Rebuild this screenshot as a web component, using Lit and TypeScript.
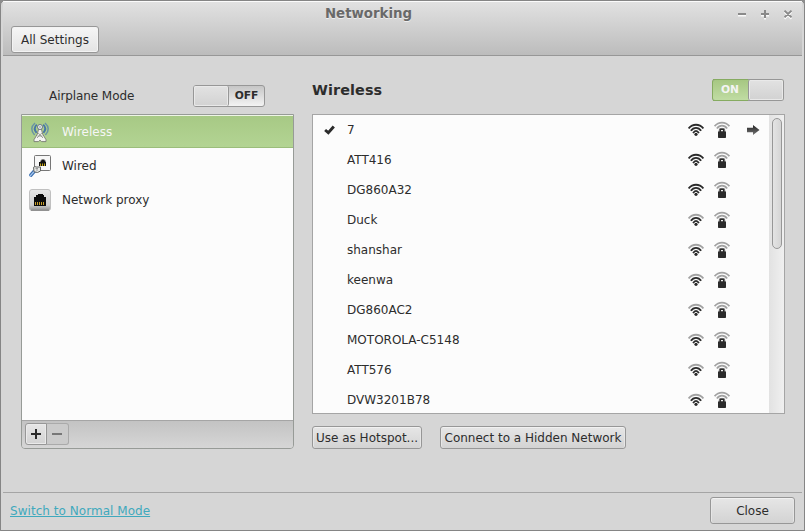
import { LitElement, html, css, svg } from "lit";
import { customElement, property } from "lit/decorators.js";

const base = css`
  :host { box-sizing: border-box; }
  *, *::before, *::after { box-sizing: border-box; }
  svg { display: block; }
`;

@customElement("push-button")
class PushButton extends LitElement {
  static styles = [base, css`
    :host { display: block; }
    .face {
      width: 100%; height: 100%;
      display: flex; align-items: center; justify-content: center;
      border: 1px solid #979797; border-radius: 3px;
      background: linear-gradient(#e6e6e6, #d3d3d3);
      box-shadow: inset 0 1px #f1f1f1, inset 1px 0 #e6e6e6, inset -1px 0 #e6e6e6;
      white-space: nowrap; color: #2d2d2d;
    }
    :host([bright]) .face { background: linear-gradient(#f6f6f6, #e3e3e3); box-shadow: inset 0 0 0 1px #f3f3f3; }
  `];
  render() { return html`<div class="face"><slot></slot></div>`; }
}

@customElement("toggle-switch")
class ToggleSwitch extends LitElement {
  @property({ type: Boolean, reflect: true }) on = false;
  static styles = [base, css`
    :host { display: block; width: 72px; height: 22px; }
    .track {
      display: flex; width: 72px; height: 22px; border: 1px solid #979797; border-radius: 3px;
      background: linear-gradient(#c6c6c6, #f3f3f3);
    }
    .knob {
      width: 35px; height: 20px; border-radius: 2px; background: linear-gradient(#e2e2e2, #d2d2d2);
      border-right: 1px solid #979797; box-shadow: inset 0 0 0 1px #e9e9e9;
    }
    .text {
      flex: 1; display: flex; align-items: center; justify-content: center;
      font-weight: bold; font-size: 10.7px; line-height: 18px; height: 19px; color: #2d2d2d;
    }
    :host([on]) .track { flex-direction: row-reverse; background: linear-gradient(#a6c782, #c0dca3); border-left-color: #86ab61; }
    :host([on]) .knob { border-right: 0; border-left: 1px solid #979797; }
    :host([on]) .text { color: #f4f4f4; margin: -1px 0; height: 22px; padding-right: 1px; border: solid #86ab61; border-width: 1px 0; }
  `];
  render() {
    return html`<div class="track"><div class="knob"></div><div class="text">${this.on ? "ON" : "OFF"}</div></div>`;
  }
}

const wifi = (full: boolean) => svg`
  <svg width="16" height="16" viewBox="0 0 16 16" fill="none" stroke="#2b2b2b" stroke-width="1.9">
    <path d="M0.6 6.4C4.6 1.6 11.4 1.6 15.4 6.4" stroke=${full ? "#2b2b2b" : "#a2a2a2"}/>
    <path d="M2.9 8.8C5.6 4.9 10.4 4.9 13.1 8.8"/>
    <path d="M5.1 11.1C6.8 8 9.2 8 10.9 11.1" stroke-width="1.8"/>
    <circle cx="8" cy="12.3" r="1.6" fill="#2b2b2b" stroke="none"/>
  </svg>`;

const lock = svg`
  <svg width="16" height="18" viewBox="0 0 16 18" fill="none" stroke="#a2a2a2" stroke-width="1.8">
    <path d="M0.6 5.2C4.6 .4 11.4 .4 15.4 5.2"/>
    <path d="M2.9 7.6C5.6 3.7 10.4 3.7 13.1 7.6"/>
    <path d="M5 9.8Q5.8 7.9 8 7.6Q10.2 7.9 11 9.8" stroke-width="1.6"/>
    <path d="M6.3 11V8.2H9.7V11" stroke="#2b2b2b" stroke-width="1.5" fill="#fcfcfc"/>
    <rect x="4" y="10.3" width="8" height="6.7" rx=".7" fill="#2b2b2b" stroke="none"/>
  </svg>`;

const antenna = svg`
  <svg width="20" height="22" viewBox="0 0 20 22" fill="none">
    <path d="M5 2Q-1.2 7.4 4.6 14M15 2Q21.2 7.4 15.4 14" stroke="#6a93a4" stroke-width="1.5"/>
    <path d="M6.8 3.6Q2.8 7.4 6.6 11.8M13.2 3.6Q17.2 7.4 13.4 11.8" stroke="#4777a6" stroke-width="1.9"/>
    <path d="M8.6 8L7.4 13 4 18.7V20.6H8.4L10 19.2 11.6 20.6H16V18.7L12.6 13 11.4 8Z" fill="#f4f4f2" stroke="#777b74" stroke-width=".9"/>
    <path d="M8.2 12L13 17M11.8 12L7 17M7.4 15H12.6" stroke="#92968f" stroke-width=".9"/>
    <circle cx="10" cy="6" r="2.5" fill="#f0f0f0" stroke="#6b7880"/>
    <circle cx="10" cy="6" r=".8" fill="#73869a"/>
  </svg>`;

const wired = svg`
  <svg width="22" height="22" viewBox="0 0 22 22" fill="none">
    <rect x="5.5" y=".5" width="16" height="15" rx="1" fill="#f7f7f7" stroke="#777"/>
    <path d="M10 11V7H11.5V5.5H12.5V4.5H15.5V5.5H16.5V7H17V11Z" fill="#111"/>
    <path d="M11.5 8.5V11M13.5 8.5V11M15.5 8.5V11" stroke="#c4a317"/>
    <path d="M5.5 16L.8 21.3" stroke="#3b6fb0" stroke-width="3.6"/>
    <path d="M5.5 16L.8 21.3" stroke="#a6c6ec" stroke-width="1.2"/>
    <path d="M4.5 12.3L6 11.5 7 12H11.5V16L8.5 17.5 5 16.8Z" fill="#e5e7e5" stroke="#626562"/>
    <path d="M6.5 13.5H9M7 15H9" stroke="#999"/>
  </svg>`;

const proxy = svg`
  <svg width="22" height="22" viewBox="0 0 22 22" fill="none">
    <defs><linearGradient id="plate" x2="0" y2="1"><stop stop-color="#e8e8e8"/><stop offset=".75" stop-color="#cfcfcf"/><stop offset="1" stop-color="#8f8f8f"/></linearGradient></defs>
    <rect x=".5" y=".5" width="21" height="21" rx="2.5" fill="url(#plate)" stroke="#c0c0c0"/>
    <path d="M2 21.3H20" stroke="#858585"/>
    <path d="M5 17V8H7V6H9V5H14V6H15V8H17V17Z" fill="#0c0c0c"/>
    <path d="M6.5 13V16M8.5 13V16M10.5 13V16M12.5 13V16M14.5 13V16" stroke="#c9a02c"/>
  </svg>`;

@customElement("device-list")
class DeviceList extends LitElement {
  static styles = [base, css`
    :host { display: flex; flex-direction: column; width: 273px; height: 335px; border: 1px solid #979b97; border-radius: 0 0 4px 4px; overflow: hidden; }
    .items { flex: 1; background: #fcfcfc; }
    .item { height: 34px; padding-left: 7px; display: flex; align-items: center; }
    .icon { width: 22px; display: flex; justify-content: center; }
    .name { margin-left: 11px; margin-top: -1px; }
    .selected { height: 33px; margin-bottom: 1px; border-top: 1px solid #eef5e6; border-bottom: 1px solid #9bbd7b; background: linear-gradient(#a7c985, #b3d493); color: #f6f6f6; }
    .selected .name { margin-top: 1px; }
    .bar { height: 28px; border-top: 1px solid #a5a5a5; background: linear-gradient(#c3c3c3, #d6d6d6); padding: 2px 3px; display: flex; }
    .tool { width: 22px; height: 22px; border: 1px solid #979797; border-radius: 3px 0 0 3px; background: linear-gradient(#e6e6e6, #d3d3d3); box-shadow: inset 0 0 0 1px #eaeaea; display: grid; place-items: center; }
    .off { border-left: 0; border-color: #aaa; border-radius: 0 3px 3px 0; background: #cbcbcb; box-shadow: none; }
    .off svg { transform: translateX(-1px); }
  `];
  render() {
    return html`
      <div class="items">
        <div class="item selected"><span class="icon">${antenna}</span><span class="name">Wireless</span></div>
        <div class="item"><span class="icon">${wired}</span><span class="name">Wired</span></div>
        <div class="item"><span class="icon">${proxy}</span><span class="name">Network proxy</span></div>
      </div>
      <div class="bar">
        <div class="tool"><svg width="10" height="10" viewBox="0 0 10 10"><path d="M0 5H10M5 0V10" stroke="#2b2b2b" stroke-width="2"/></svg></div>
        <div class="tool off"><svg width="10" height="10" viewBox="0 0 10 10"><path d="M0 5H10" stroke="#777" stroke-width="2"/></svg></div>
      </div>`;
  }
}

interface Network { name: string; full?: boolean; active?: boolean }
const networks: Network[] = [
  { name: "7", full: true, active: true }, { name: "ATT416", full: true }, { name: "DG860A32", full: true },
  { name: "Duck" }, { name: "shanshar" }, { name: "keenwa" }, { name: "DG860AC2" },
  { name: "MOTOROLA-C5148" }, { name: "ATT576" }, { name: "DVW3201B78" },
];

@customElement("network-list")
class NetworkList extends LitElement {
  static styles = [base, css`
    :host { display: flex; width: 473px; height: 300px; border: 1px solid #a5a5a5; background: #fcfcfc; overflow: hidden; }
    .rows { flex: 1; }
    .row { height: 30px; display: grid; grid-template-columns: 34px 341px 26px 33px 1fr; align-items: center; }
    .check { padding-left: 11px; }
    .name { line-height: 30px; height: 30px; }
    .scroll { width: 15px; padding: 3px 3px 0 3px; background: linear-gradient(90deg, #e2e2e2, #f0f0f0); }
    .thumb { width: 10px; height: 131px; border: 1px solid #979797; border-radius: 5px; background: linear-gradient(90deg, #e4e4e4, #d5d5d5); }
  `];
  render() {
    return html`
      <div class="rows">
        ${networks.map(n => html`
          <div class="row">
            <span class="check">${n.active ? svg`<svg width="11" height="10" viewBox="0 0 11 10"><path d="M1.1 5L4.3 7.7 9.8 1.5" fill="none" stroke="#2b2b2b" stroke-width="2.9"/></svg>` : ""}</span>
            <span class="name">${n.name}</span>
            ${wifi(!!n.full)}
            ${lock}
            ${n.active ? svg`<svg width="13" height="10" viewBox="0 0 13 10"><defs><linearGradient id="arrow" x2="0" y2="1"><stop stop-color="#222"/><stop offset="1" stop-color="#777"/></linearGradient></defs><path d="M0 2.8H6V0L12.5 5 6 10V7.2H0Z" fill="url(#arrow)"/></svg>` : ""}
          </div>`)}
      </div>
      <div class="scroll"><div class="thumb"></div></div>`;
  }
}

@customElement("app-root")
class AppRoot extends LitElement {
  static styles = [base, css`
    :host { display: block; width: 805px; height: 531px; background: #8c8c8c; overflow: hidden; font: 12px/16px "DejaVu Sans", sans-serif; color: #2d2d2d; }
    .window { width: 805px; height: 531px; display: flex; flex-direction: column; border: 1px solid #858585; border-radius: 5px 5px 0 0; background: #d6d6d6; overflow: hidden; }
    .header { height: 55px; margin: 0 2px; border-bottom: 1px solid #979797; background: linear-gradient(#e2e2e2, #bcbcbc); box-shadow: inset 0 1px #fbfbfb; }
    .title { height: 25px; display: grid; grid-template-columns: 1fr auto 1fr; align-items: center; }
    .caption { grid-column: 2; font-weight: bold; font-size: 13.33px; color: #696969; text-shadow: 0 1px #eee; transform: translateX(-34px); }
    .controls { justify-self: end; margin-right: 7px; display: flex; }
    .all { width: 88px; height: 27px; margin-left: 8px; }
    .main { flex: 1; display: flex; padding: 0 19px 0 20px; }
    .left { width: 273px; }
    .right { width: 473px; margin-left: 18px; }
    .head { height: 58px; display: flex; justify-content: space-between; }
    .airplane { margin: 32px 0 0 28px; letter-spacing: -0.08px; }
    .left toggle-switch { margin: 29px 29px 0 0; }
    .right toggle-switch { margin: 23px 1px 0 0; }
    .heading { font-weight: bold; font-size: 14.4px; letter-spacing: 0.1px; line-height: 20px; margin-top: 24px; }
    .actions { display: flex; gap: 18px; margin-top: 12px; }
    .hotspot { width: 110px; height: 23px; }
    .hidden { width: 186px; height: 23px; }
    .footer { height: 38px; margin: 0 2px; padding: 4px 7px 0 7px; border-top: 1px solid #a5a5a5; display: flex; justify-content: space-between; }
    .link { color: #3fa9bd; text-decoration: underline; margin-top: 6px; letter-spacing: 0.04px; }
    .close { width: 85px; height: 27px; }
  `];
  render() {
    return html`
      <div class="window">
        <div class="header">
          <div class="title">
            <span class="caption">Networking</span>
            <span class="controls">
              <svg width="60" height="12" viewBox="0 0 60 12" fill="none">
                <path d="M3 7.5H11M26 7.5H34M30 3.5V11.5M49.5 4L56.5 10.8M56.5 4L49.5 10.8" stroke="#fafafa" stroke-width="2"/>
                <path d="M3 6H11M26 6H34M30 2V10M49.5 2.6L56.5 9.4M56.5 2.6L49.5 9.4" stroke="#8a8a8a" stroke-width="2"/>
              </svg>
            </span>
          </div>
          <push-button class="all" bright>All Settings</push-button>
        </div>
        <div class="main">
          <div class="left">
            <div class="head"><span class="airplane">Airplane Mode</span><toggle-switch></toggle-switch></div>
            <device-list></device-list>
          </div>
          <div class="right">
            <div class="head"><span class="heading">Wireless</span><toggle-switch on></toggle-switch></div>
            <network-list></network-list>
            <div class="actions">
              <push-button class="hotspot">Use as Hotspot...</push-button>
              <push-button class="hidden">Connect to a Hidden Network</push-button>
            </div>
          </div>
        </div>
        <div class="footer"><span class="link">Switch to Normal Mode</span><push-button class="close">Close</push-button></div>
      </div>`;
  }
}
